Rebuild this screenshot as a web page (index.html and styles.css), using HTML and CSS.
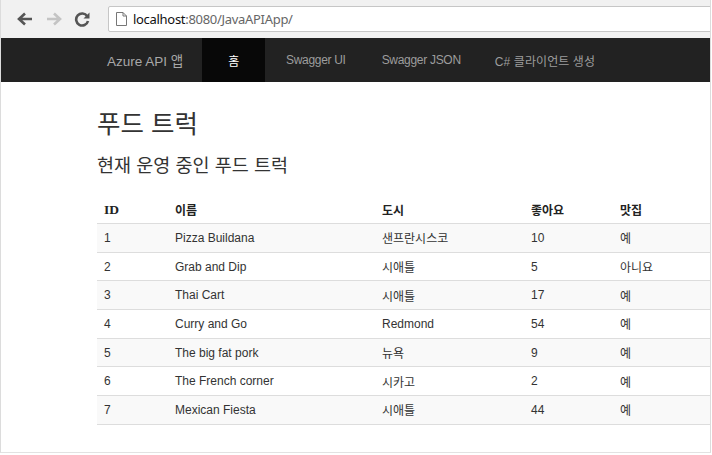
FILE: index.html
```html
<!DOCTYPE html>
<html lang="ko">
<head>
<meta charset="utf-8">
<title>Azure API 앱</title>
<link rel="stylesheet" href="styles.css">
</head>
<body>
<div class="window">
  <div class="toolbar">
    <div class="navbtns">
      <svg class="btn" width="18" height="16" viewBox="0 0 18 16"><path d="M16 8H4M9 2.5L3 8l6 5.5" fill="none" stroke="#555" stroke-width="2.6"/></svg>
      <svg class="btn" width="18" height="16" viewBox="0 0 18 16"><path d="M2 8h12M9 2.5L15 8l-6 5.5" fill="none" stroke="#c4c4c4" stroke-width="2.6"/></svg>
      <svg class="btn" width="18" height="16" viewBox="0 0 18 16"><path d="M13.2 5.2A6 6 0 1 0 14 10" fill="none" stroke="#555" stroke-width="2.6"/><path d="M15.5 1.5v6h-6z" fill="#555"/></svg>
    </div>
    <div class="address">
      <svg class="page" width="11" height="14" viewBox="0 0 11 14"><path d="M0.5 0.5h6.5l3.5 3.5v9.5h-10z M7 0.5v3.5h3.5" fill="#fff" stroke="#777" stroke-width="1"/></svg>
      <span class="host">localhost</span><span class="path">:8080/JavaAPIApp/</span>
    </div>
  </div>
  <nav class="navbar">
    <a class="brand">Azure API 앱</a>
    <ul class="menu">
      <li class="active"><a>홈</a></li>
      <li class="first"><a>Swagger UI</a></li>
      <li><a>Swagger JSON</a></li>
      <li class="last"><a>C# 클라이언트 생성</a></li>
    </ul>
  </nav>
  <main class="content">
    <h1>푸드 트럭</h1>
    <h3>현재 운영 중인 푸드 트럭</h3>
    <table class="grid">
      <thead>
        <tr><th class="c-id">ID</th><th class="c-name">이름</th><th class="c-city">도시</th><th class="c-likes">좋아요</th><th>맛집</th></tr>
      </thead>
      <tbody>
        <tr><td>1</td><td>Pizza Buildana</td><td>샌프란시스코</td><td>10</td><td>예</td></tr>
        <tr><td>2</td><td>Grab and Dip</td><td>시애틀</td><td>5</td><td>아니요</td></tr>
        <tr><td>3</td><td>Thai Cart</td><td>시애틀</td><td>17</td><td>예</td></tr>
        <tr><td>4</td><td>Curry and Go</td><td>Redmond</td><td>54</td><td>예</td></tr>
        <tr><td>5</td><td>The big fat pork</td><td>뉴욕</td><td>9</td><td>예</td></tr>
        <tr><td>6</td><td>The French corner</td><td>시카고</td><td>2</td><td>예</td></tr>
        <tr><td>7</td><td>Mexican Fiesta</td><td>시애틀</td><td>44</td><td>예</td></tr>
      </tbody>
    </table>
  </main>
</div>
</body>
</html>
```
FILE: styles.css
```css
html, body {
  margin: 0;
  padding: 0;
  background: #fff;
}
body {
  font-family: "Liberation Sans", "Noto Sans CJK KR", sans-serif;
  color: #333;
}
.window {
  width: 709px;
  height: 452px;
  border-left: 1px solid #dcdcdc;
  border-right: 1px solid #dcdcdc;
  border-bottom: 1px solid #e2e2e2;
  overflow: hidden;
}
.toolbar {
  height: 38px;
  background: #f1f1f1;
  display: flex;
  align-items: center;
}
.navbtns {
  display: flex;
  gap: 11px;
  padding-left: 15px;
  width: 92px;
}
.btn { display: block; }
.address {
  flex: 1;
  height: 24px;
  margin-top: -1px;
  margin-right: -4px;
  background: #fff;
  border: 1px solid #c6c6c6;
  border-radius: 2px;
  display: flex;
  align-items: center;
  padding-left: 7px;
  font-family: "Noto Sans", sans-serif;
  font-size: 13px;
  letter-spacing: -0.3px;
}
.page { margin-right: 6px; }
.host { color: #111; }
.path { color: #666; }
.navbar {
  height: 44px;
  background: #222;
  display: flex;
  align-items: stretch;
  padding-left: 106px;
}
.brand {
  color: #a8a8a8;
  font-size: 13.5px;
  display: flex;
  align-items: center;
  padding-right: 19px;
}
.menu {
  list-style: none;
  display: flex;
  margin: 0;
  padding: 0;
}
.menu li {
  display: flex;
}
.menu a {
  display: flex;
  align-items: center;
  padding: 0 18px;
  color: #9d9d9d;
  font-size: 12px;
  letter-spacing: -0.3px;
}
.menu li.first a {
  padding-left: 21px;
}
.menu li.last a {
  padding-left: 16px;
  letter-spacing: 0.1px;
}
.menu li.active a {
  background: #080808;
  color: #fff;
  padding: 0 26px;
}
.content {
  padding-left: 96px;
}
h1 {
  font-family: "Noto Sans CJK KR", sans-serif;
  font-weight: 400;
  font-size: 25.5px;
  margin: 23px 0 0 0;
  line-height: 34px;
  color: #333;
}
h3 {
  font-family: "Noto Sans CJK KR", sans-serif;
  font-weight: 400;
  font-size: 18.5px;
  margin: 12px 0 0 0;
  line-height: 26px;
  color: #333;
}
.grid {
  width: 100%;
  border-collapse: collapse;
  margin-top: 19px;
  font-size: 12px;
}
.grid th {
  text-align: left;
  font-weight: 700;
  height: 27px;
  padding: 0 7px;
  border-bottom: 1px solid #ddd;
  color: #222;
}
.grid th.c-id { font-family: "Liberation Serif", serif; font-size: 13.5px; width: 57px; }
.grid th.c-name { width: 193px; }
.grid th.c-city { width: 135px; }
.grid th.c-likes { width: 75px; }
.grid td {
  height: 27.7px;
  padding: 0 7px;
  border-bottom: 1px solid #ddd;
  color: #333;
}
.grid tbody tr:nth-child(odd) td {
  background: #f9f9f9;
}
```
